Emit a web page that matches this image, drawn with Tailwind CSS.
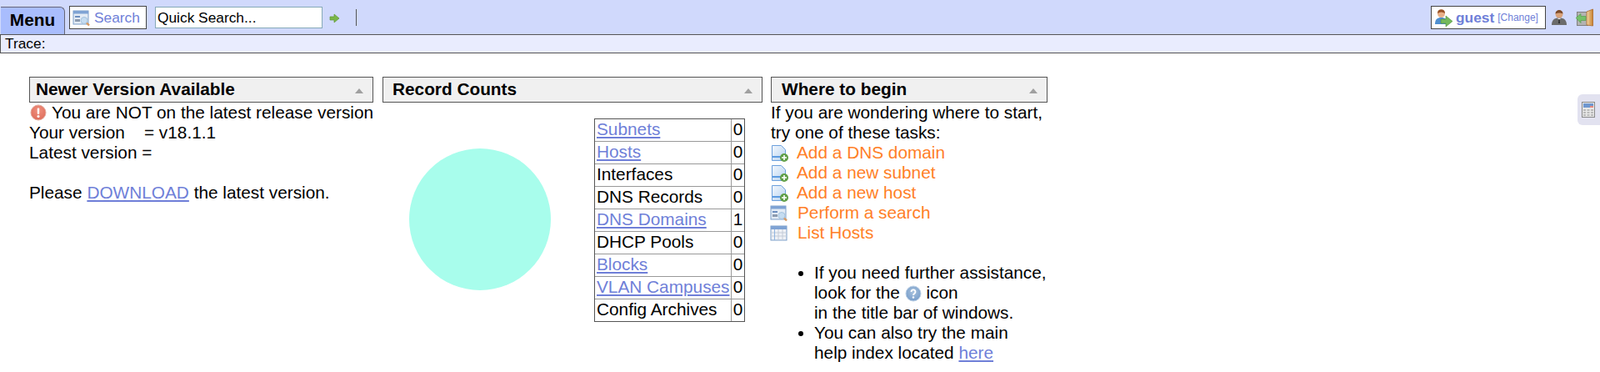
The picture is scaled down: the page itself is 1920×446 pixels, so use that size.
<!DOCTYPE html>
<html lang="en">

<head>
    <meta charset="UTF-8">
    <title>Dashboard</title>
    <script src="https://cdn.jsdelivr.net/npm/@tailwindcss/browser@4"></script>
</head>

<body class="relative h-[446px] overflow-hidden bg-white font-['Liberation_Sans',Arial,sans-serif] text-[20.8px] leading-[24px] text-black">
    <!-- shared icon gradients -->
    <svg class="absolute h-0 w-0">
        <defs>
            <linearGradient id="docFill" x1="0" y1="0" x2="1" y2="1">
                <stop offset="0" stop-color="#f4f8fd" />
                <stop offset="1" stop-color="#b5d2f0" />
            </linearGradient>
            <radialGradient id="errFill" cx=".5" cy=".35" r=".7">
                <stop offset="0" stop-color="#f0917f" />
                <stop offset="1" stop-color="#dd6a58" />
            </radialGradient>
            <radialGradient id="helpFill" cx=".5" cy=".4" r=".7">
                <stop offset="0" stop-color="#a8c2de" />
                <stop offset="1" stop-color="#6f97c6" />
            </radialGradient>
            <linearGradient id="doorFill" x1="0" y1="0" x2="1" y2="0">
                <stop offset="0" stop-color="#f2d9a8" />
                <stop offset="1" stop-color="#c9802f" />
            </linearGradient>
        </defs>
    </svg>

    <!-- top toolbar -->
    <div class="flex h-[42px] items-start border-b border-[#555] bg-[#d0d9fc]">
        <div class="ml-px mt-[8px] flex h-[33px] w-[77px] items-center justify-center rounded-tr-[6px] border-r border-t border-[#667] bg-[#a9bdfd] pb-[2px] text-[20.8px] font-bold">Menu</div>
        <div class="ml-[5px] mt-[7px] flex h-[28px] w-[93px] items-center border border-[#444] bg-white pl-[3px]">
            <svg class="h-[21px] w-[21px] shrink-0" viewBox="0 0 21 21">
                <rect x="1" y="2" width="18" height="16" fill="#e3ebf5" stroke="#7d9fc9" />
                <rect x="1" y="2" width="18" height="3.500" fill="#7fa3d4" />
                <rect x="3" y="8" width="6" height="2" fill="#6d8fc0" />
                <rect x="3" y="12" width="6" height="3" fill="#8c9bb0" />
                <circle cx="14" cy="13.500" r="4" fill="#c5dcf0" stroke="#a5c3de" />
                <path d="M17 16.500l3 3" stroke="#d89a62" stroke-width="2.400" />
            </svg>
            <span class="ml-[5px] text-[17.33px] leading-[20px] text-[#6f7fd8]">Search</span>
        </div>
        <input class="ml-[10px] mt-[8px] h-[26px] w-[201px] border border-[#86a9b8] bg-white px-[2px] text-[17.33px] text-black outline-none" type="text" value="Quick Search...">
        <svg class="ml-[8px] mt-[16px] h-[12px] w-[13px]" viewBox="0 0 13 12">
            <path d="M1 4h5V1l6 5-6 5V8H1z" fill="#7ab648" stroke="#5f9a35" stroke-width=".7" />
        </svg>
        <div class="ml-[19px] mt-[11px] h-[20px] w-px bg-[#555]"></div>

        <div class="ml-auto mt-[7px] flex h-[28px] w-[138px] items-center border border-[#444] bg-white pl-[3px]">
            <svg class="h-[22px] w-[22px] shrink-0" viewBox="0 0 22 22">
                <path d="M1 19c0-6 3-8 7.500-8s7.500 2 7.500 8z" fill="#4f8fd0" />
                <circle cx="8.500" cy="6.500" r="4.500" fill="#e8b088" />
                <path d="M4 6c-.5-6.500 9.500-6.500 9 0-3-2-6-2-9 0z" fill="#9a5226" />
                <path d="M8 13h6v-4l8 6.500-8 6.500v-4H8z" fill="#74b85c" stroke="#4f8f3a" stroke-width=".6" />
            </svg>
            <span class="ml-[4px] text-[17.33px] font-bold leading-[20px] text-[#6f7fd8]">guest</span>
            <span class="ml-[4px] text-[12px] leading-[20px] text-[#6f7fd8]">[Change]</span>
        </div>
        <svg class="ml-[7px] mt-[11px] h-[20px] w-[18px]" viewBox="0 0 18 20">
            <path d="M0 19c0-6 3-8.500 9-8.500s9 2.500 9 8.500z" fill="#6b6b6b" />
            <circle cx="9" cy="6" r="4.500" fill="#d9a27a" />
            <path d="M4.500 5.500c0-6 9-6 9 0-3-1.500-6-1.500-9 0z" fill="#7b4a2a" />
            <path d="M7 11h4l-2 2z" fill="#e6e6e6" />
            <path d="M8.400 12h1.200l.5 5h-2.200z" fill="#333" />
        </svg>
        <svg class="ml-[11px] mt-[10px] h-[22px] w-[21px]" viewBox="0 0 21 22">
            <rect x="1.500" y="4.500" width="13" height="16" fill="#b3b3b3" stroke="#808080" />
            <path d="M13 4l7.500-3v20l-7.500-1z" fill="url(#doorFill)" stroke="#a9682a" stroke-width=".8" />
            <path d="M0 11.500l6-5v3h6v5H6v3z" fill="#74c06a" stroke="#4f9a45" stroke-width=".6" />
        </svg>
        <div class="w-[8px] shrink-0"></div>
    </div>

    <!-- trace bar -->
    <div class="h-[22px] border-b border-l border-[#555] bg-[#e9ecfe] pl-[5px] text-[17.33px] leading-[20px]">Trace:</div>

    <!-- panels -->
    <div class="flex items-start pl-[35px] pt-[28px]">
        <div class="w-[413px]">
            <div class="flex h-[31px] items-center justify-between border border-[#555] bg-[#f0f0f0] pb-px pl-[7px] pr-[11px] text-[20.8px] font-bold">
                <span>Newer Version Available</span>
                <span class="mt-[4px] h-0 w-0 border-x-[5px] border-b-[6px] border-x-transparent border-b-[#a0a0a0]"></span>
            </div>
            <div>
                <div class="flex h-[24px] items-center whitespace-nowrap">
                    <svg class="ml-px mr-[6px] h-[20px] w-[20px] shrink-0" viewBox="0 0 20 20">
                        <circle cx="10" cy="10" r="9" fill="url(#errFill)" stroke="#e3a99c" />
                        <rect x="8.800" y="4.500" width="2.400" height="7.500" rx="1" fill="#fff" />
                        <circle cx="10" cy="14.500" r="1.500" fill="#fff" />
                    </svg>
                    <span>You are NOT on the latest release version</span>
                </div>
                <div class="whitespace-pre">Your version    = v18.1.1</div>
                <div>Latest version =</div>
                <div class="h-[24px]"></div>
                <div>Please <a href="#" class="text-[#6f7fd8] underline">DOWNLOAD</a> the latest version.</div>
            </div>
        </div>

        <div class="ml-[11px] w-[456px]">
            <div class="flex h-[31px] items-center justify-between border border-[#555] bg-[#f0f0f0] pb-px pl-[11px] pr-[11px] text-[20.8px] font-bold">
                <span>Record Counts</span>
                <span class="mt-[4px] h-0 w-0 border-x-[5px] border-b-[6px] border-x-transparent border-b-[#a0a0a0]"></span>
            </div>
            <div class="flex">
                <div class="ml-[32px] mt-[55px] h-[170px] w-[170px] rounded-full bg-[#a8fdec]"></div>
                <table class="ml-[52px] mt-[19px] h-[244px] w-[181px] border-separate border-spacing-0 border border-[#555]">
                    <tbody>
                        <tr class="h-[27px]">
                            <td class="border-b border-r border-[#999] pl-[2px] align-top"><a href="#" class="text-[#6f7fd8] underline">Subnets</a></td>
                            <td class="w-[15px] border-b border-[#999] text-center align-top">0</td>
                        </tr>
                        <tr class="h-[27px]">
                            <td class="border-b border-r border-[#999] pl-[2px] align-top"><a href="#" class="text-[#6f7fd8] underline">Hosts</a></td>
                            <td class="border-b border-[#999] text-center align-top">0</td>
                        </tr>
                        <tr class="h-[27px]">
                            <td class="border-b border-r border-[#999] pl-[2px] align-top">Interfaces</td>
                            <td class="border-b border-[#999] text-center align-top">0</td>
                        </tr>
                        <tr class="h-[27px]">
                            <td class="border-b border-r border-[#999] pl-[2px] align-top">DNS Records</td>
                            <td class="border-b border-[#999] text-center align-top">0</td>
                        </tr>
                        <tr class="h-[27px]">
                            <td class="border-b border-r border-[#999] pl-[2px] align-top"><a href="#" class="text-[#6f7fd8] underline">DNS Domains</a></td>
                            <td class="border-b border-[#999] text-center align-top">1</td>
                        </tr>
                        <tr class="h-[27px]">
                            <td class="border-b border-r border-[#999] pl-[2px] align-top">DHCP Pools</td>
                            <td class="border-b border-[#999] text-center align-top">0</td>
                        </tr>
                        <tr class="h-[27px]">
                            <td class="border-b border-r border-[#999] pl-[2px] align-top"><a href="#" class="text-[#6f7fd8] underline">Blocks</a></td>
                            <td class="border-b border-[#999] text-center align-top">0</td>
                        </tr>
                        <tr class="h-[27px]">
                            <td class="border-b border-r border-[#999] pl-[2px] align-top"><a href="#" class="text-[#6f7fd8] underline">VLAN Campuses</a></td>
                            <td class="border-b border-[#999] text-center align-top">0</td>
                        </tr>
                        <tr class="h-[26px]">
                            <td class="border-r border-[#999] pl-[2px] align-top">Config Archives</td>
                            <td class="text-center align-top">0</td>
                        </tr>
                    </tbody>
                </table>
            </div>
        </div>

        <div class="ml-[10px] w-[332px]">
            <div class="flex h-[31px] items-center justify-between border border-[#555] bg-[#f0f0f0] pb-px pl-[12px] pr-[11px] text-[20.8px] font-bold">
                <span>Where to begin</span>
                <span class="mt-[4px] h-0 w-0 border-x-[5px] border-b-[6px] border-x-transparent border-b-[#a0a0a0]"></span>
            </div>
            <div>
                <div class="whitespace-nowrap">If you are wondering where to start,</div>
                <div>try one of these tasks:</div>
                <div class="flex h-[24px] items-center text-[#ff7f27]">
                    <svg class="mr-[10px] h-[21px] w-[21px] shrink-0" viewBox="0 0 21 21">
                        <path d="M1.500 1.500h11l5 5v13h-16z" fill="url(#docFill)" stroke="#6ca0dc" />
                        <rect x="2" y="14" width="11" height="2" fill="#5d9be0" />
                        <circle cx="16" cy="16" r="5" fill="#5f9e46" />
                        <path d="M16 13v6M13 16h6" stroke="#fff" stroke-width="1.600" />
                    </svg>
                    <span>Add a DNS domain</span>
                </div>
                <div class="flex h-[24px] items-center text-[#ff7f27]">
                    <svg class="mr-[10px] h-[21px] w-[21px] shrink-0" viewBox="0 0 21 21">
                        <path d="M1.500 1.500h11l5 5v13h-16z" fill="url(#docFill)" stroke="#6ca0dc" />
                        <rect x="2" y="14" width="11" height="2" fill="#5d9be0" />
                        <circle cx="16" cy="16" r="5" fill="#5f9e46" />
                        <path d="M16 13v6M13 16h6" stroke="#fff" stroke-width="1.600" />
                    </svg>
                    <span>Add a new subnet</span>
                </div>
                <div class="flex h-[24px] items-center text-[#ff7f27]">
                    <svg class="mr-[10px] h-[21px] w-[21px] shrink-0" viewBox="0 0 21 21">
                        <path d="M1.500 1.500h11l5 5v13h-16z" fill="url(#docFill)" stroke="#6ca0dc" />
                        <rect x="2" y="14" width="11" height="2" fill="#5d9be0" />
                        <circle cx="16" cy="16" r="5" fill="#5f9e46" />
                        <path d="M16 13v6M13 16h6" stroke="#fff" stroke-width="1.600" />
                    </svg>
                    <span>Add a new host</span>
                </div>
                <div class="-ml-px flex h-[24px] items-center text-[#ff7f27]">
                    <svg class="mr-[12px] h-[21px] w-[21px] shrink-0" viewBox="0 0 21 21">
                        <rect x="1" y="2" width="18" height="16" fill="#e3ebf5" stroke="#7d9fc9" />
                        <rect x="1" y="2" width="18" height="3.500" fill="#7fa3d4" />
                        <rect x="3" y="8" width="6" height="2" fill="#6d8fc0" />
                        <rect x="3" y="12" width="6" height="3" fill="#8c9bb0" />
                        <circle cx="14" cy="13.500" r="4" fill="#c5dcf0" stroke="#a5c3de" />
                        <path d="M17 16.500l3 3" stroke="#d89a62" stroke-width="2.400" />
                    </svg>
                    <span>Perform a search</span>
                </div>
                <div class="-ml-px flex h-[24px] items-center text-[#ff7f27]">
                    <svg class="mr-[12px] h-[21px] w-[21px] shrink-0" viewBox="0 0 21 21">
                        <rect x="1" y="2" width="19" height="17" fill="#eef1f6" stroke="#7d9fc9" />
                        <rect x="1" y="2" width="19" height="4" fill="#7fa3d4" />
                        <path d="M1 10h19M1 14h19M10 6v13M15 6v13" stroke="#c4ccd8" />
                        <path d="M5.500 6v13" stroke="#8fb4e0" />
                    </svg>
                    <span>List Hosts</span>
                </div>
                <ul class="ml-[52px] mt-[24px] list-outside list-disc whitespace-nowrap">
                    <li>If you need further assistance,<br>look for the
                        <svg class="inline-block h-[20px] w-[20px] align-[-4px]" viewBox="0 0 20 20">
                            <circle cx="10" cy="10" r="9" fill="url(#helpFill)" stroke="#bcd0e6" />
                            <path d="M7.500 8c0-3.500 5-3.500 5 0 0 2-2.500 2-2.500 4" fill="none" stroke="#fff" stroke-width="1.800" />
                            <circle cx="10" cy="14.500" r="1.200" fill="#fff" />
                        </svg>
                        icon<br>in the title bar of windows.
                    </li>
                    <li>You can also try the main<br>help index located <a href="#" class="text-[#6f7fd8] underline">here</a></li>
                </ul>
            </div>
        </div>
    </div>

    <!-- side tab -->
    <div class="absolute right-0 top-[113px] flex h-[37px] w-[27px] items-center rounded-l-[6px] bg-[#e2e2f0] pl-[5px]">
        <svg class="h-[19px] w-[16px]" viewBox="0 0 16 19">
            <rect x=".5" y=".5" width="15" height="18" fill="#e8e8e8" stroke="#8a8a8a" />
            <rect x="2" y="2" width="12" height="5" fill="#6f97cf" />
            <rect x="10" y="5" width="4" height="2" fill="#e58a80" />
            <path d="M2 10h3M6.500 10h3M11 10h3M2 13h3M6.500 13h3M11 13h3M2 16h3M6.500 16h3M11 16h3" stroke="#aaa" stroke-width="1.500" />
        </svg>
    </div>
</body>

</html>
